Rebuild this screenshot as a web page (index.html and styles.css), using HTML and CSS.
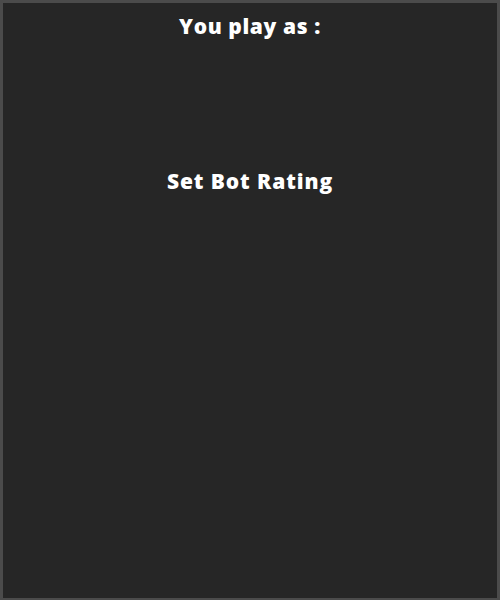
FILE: index.html
```html
<!DOCTYPE html>
<html>
<head>
<meta charset="utf-8">
<link rel="stylesheet" href="styles.css">
</head>
<body>
<div class="panel">
  <h2 class="title">You play as :</h2>
  <div class="options"></div>
  <h2 class="title rating">Set Bot Rating</h2>
</div>
</body>
</html>
```
FILE: styles.css
```css
html, body {
  margin: 0;
  padding: 0;
  background: #262626;
}
.panel {
  box-sizing: border-box;
  width: 500px;
  height: 600px;
  background: #262626;
  border: 3px solid #4b4b4b;
  border-bottom-width: 2px;
  display: flex;
  flex-direction: column;
  align-items: center;
  font-family: "Open Sans", "DejaVu Sans", sans-serif;
  color: #ffffff;
}
.title {
  margin: 0;
  font-size: 21px;
  font-weight: 800;
  line-height: 28px;
  letter-spacing: 0.6px;
}
.rating {
  letter-spacing: 0.9px;
}
.panel > .title:first-child {
  margin-top: 9px;
}
.options {
  height: 127px;
}
```
